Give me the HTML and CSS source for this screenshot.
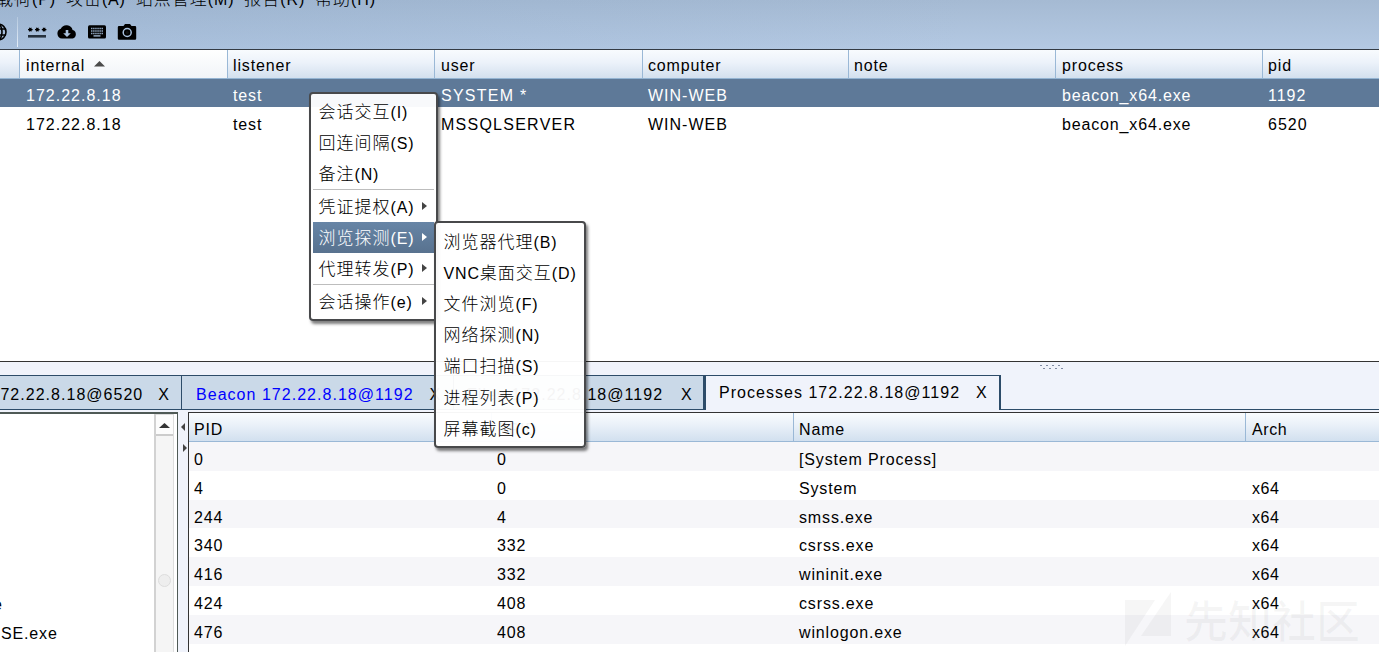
FILE: index.html
```html
<!DOCTYPE html>
<html lang="zh-CN">
<head>
<meta charset="utf-8">
<title>Beacon Console</title>
<link rel="stylesheet" href="styles.css">
</head>
<body>
<div class="app">
  <header class="top">
    <nav class="menubar">
      <span><b>载荷</b>(P)</span><span><b>攻击</b>(A)</span><span><b>站点管理</b>(M)</span><span><b>报告</b>(R)</span><span><b>帮助</b>(H)</span>
    </nav>
    <div class="toolbar">
      <svg class="globe" width="8" height="20" viewBox="0 0 8 20"><g fill="none" stroke="#000" stroke-width="1.6"><circle cx="-2" cy="10" r="8"/><ellipse cx="-2" cy="10" rx="4" ry="8"/><path d="M-2 7H6M-2 13H6"/></g></svg>
      <i class="tool-sep"></i>
      <svg class="tool" width="20" height="20" viewBox="0 0 20 20"><path d="M1 13h18v2.6H1z" fill="#26313d"/><path d="M1 7.6h4.600M8 7.600h4.600M14.800 7.600h4.600M2.200 5.800l2.200 3.600M4.400 5.800L2.200 9.400M9.200 5.800l2.200 3.600M11.400 5.800L9.200 9.400M16 5.800l2.200 3.600M18.200 5.800L16 9.400" stroke="#000" stroke-width="1.100"/></svg>
      <svg class="tool" width="20" height="20" viewBox="0 0 20 20"><path d="M5 16.500a5 5 0 0 1-1.200-9.700A6.300 6.300 0 0 1 15.600 8a4.400 4.400 0 0 1 0 8.500z"/><path d="M8.700 8h2.600v3.200h2.500L10 15l-3.800-3.800h2.500z" fill="#a9c1dd"/></svg>
      <svg class="tool" width="20" height="20" viewBox="0 0 20 20"><rect x="1" y="3.300" width="18" height="13.200" rx="1.500"/><path d="M4 6.500h12M4 9h12M4 11.500h12" stroke="#8fa5bf" stroke-width="1.600" stroke-dasharray="1.500 .6"/><path d="M6.500 13.900h7" stroke="#a9c1dd" stroke-width="1.300"/></svg>
      <svg class="tool" width="20" height="20" viewBox="0 0 20 20"><path d="M2 4h4.500L8 2h5l1.500 2H18q1.200 0 1.200 1.200v11.300q0 1.300-1.200 1.300H2q-1.200 0-1.200-1.300V5.200Q.8 4 2 4z"/><circle cx="10.200" cy="10.500" r="4" fill="none" stroke="#a9c1dd" stroke-width="1.500"/><circle cx="10.200" cy="10.500" r="1.600" fill="#111"/></svg>
    </div>
  </header>

  <section class="sessions">
    <div class="srow shead"><span></span><span class="sorted">internal<svg width="11" height="6" viewBox="0 0 11 6"><path d="M5.500 0L11 5.500H0z" fill="#4b4b4b"/></svg></span><span>listener</span><span>user</span><span>computer</span><span>note</span><span>process</span><span>pid</span></div>
    <div class="srow selected"><span></span><span class="num">172.22.8.18</span><span>test</span><span class="caps">SYSTEM *</span><span class="num">WIN-WEB</span><span></span><span>beacon_x64.exe</span><span class="num">1192</span></div>
    <div class="srow"><span></span><span class="num">172.22.8.18</span><span>test</span><span class="caps">MSSQLSERVER</span><span class="num">WIN-WEB</span><span></span><span>beacon_x64.exe</span><span class="num">6520</span></div>
  </section>

  <div class="splitter"><svg width="24" height="6" viewBox="0 0 24 6"><path d="M0 1.500h24M3 4.500h21" stroke="#7f8ba3" stroke-width="1" stroke-dasharray="2 4"/></svg></div>

  <div class="tabs">
    <div class="tab t1"><span>172.22.8.18@6520</span><em>X</em></div>
    <div class="tab t2"><span>Beacon 172.22.8.18@1192</span><em>X</em></div>
    <div class="tab t3"><span>Files 172.22.8.18@1192</span><em>X</em></div>
    <div class="tab active"><span>Processes 172.22.8.18@1192</span><em>X</em></div>
    <div class="tab-rest"></div>
  </div>

  <main class="bottom">
    <div class="tree">
      <div class="tree-list"><span class="clip">e</span><span>SE.exe</span></div>
      <div class="scroll"><div class="up"><svg width="11" height="6" viewBox="0 0 11 6"><path d="M5.500 0L11 5H0z" fill="#333"/></svg></div><div class="thumb"><i></i></div></div>
    </div>
    <div class="divider"><svg width="6" height="34" viewBox="0 0 6 34"><path d="M4 0v8L0 4zM2 21v8l4-4z" fill="#444"/></svg></div>
    <div class="procs">
      <div class="prow phead"><span>PID</span><span>PPID</span><span>Name</span><span>Arch</span></div>
      <div class="prow"><span>0</span><span>0</span><span>[System Process]</span><span></span></div>
      <div class="prow"><span>4</span><span>0</span><span>System</span><span>x64</span></div>
      <div class="prow"><span>244</span><span>4</span><span>smss.exe</span><span>x64</span></div>
      <div class="prow"><span>340</span><span>332</span><span>csrss.exe</span><span>x64</span></div>
      <div class="prow"><span>416</span><span>332</span><span>wininit.exe</span><span>x64</span></div>
      <div class="prow"><span>424</span><span>408</span><span>csrss.exe</span><span>x64</span></div>
      <div class="prow"><span>476</span><span>408</span><span>winlogon.exe</span><span>x64</span></div>
      <div class="prow"></div>
    </div>
  </main>

  <div class="watermark"><svg width="48" height="54" viewBox="0 0 48 54"><path d="M0 8H30L0 54zM46 0V44H16z" fill="currentColor"/></svg><span>先知社区</span></div>

  <div class="popup context">
    <div class="item"><span><b>会话交互</b>(I)</span></div>
    <div class="item"><span><b>回连间隔</b>(S)</span></div>
    <div class="item"><span><b>备注</b>(N)</span></div>
    <hr>
    <div class="item"><span><b>凭证提权</b>(A)</span><i class="arrow"></i></div>
    <div class="item hot"><span><b>浏览探测</b>(E)</span><i class="arrow"></i></div>
    <div class="item"><span><b>代理转发</b>(P)</span><i class="arrow"></i></div>
    <hr>
    <div class="item"><span><b>会话操作</b>(e)</span><i class="arrow"></i></div>
  </div>
  <div class="popup submenu">
    <div class="item"><span><b>浏览器代理</b>(B)</span></div>
    <div class="item"><span>VNC<b>桌面交互</b>(D)</span></div>
    <div class="item"><span><b>文件浏览</b>(F)</span></div>
    <div class="item"><span><b>网络探测</b>(N)</span></div>
    <div class="item"><span><b>端口扫描</b>(S)</span></div>
    <div class="item"><span><b>进程列表</b>(P)</span></div>
    <div class="item"><span><b>屏幕截图</b>(c)</span></div>
  </div>
</div>
</body>
</html>
```
FILE: styles.css
```css
* { box-sizing: border-box; }
body { margin: 0; overflow: hidden; }
.app {
  position: relative; width: 1379px; height: 652px; overflow: hidden;
  display: flex; flex-direction: column; background: #fff; color: #000;
  font: 16px/28px "Liberation Sans", "Noto Sans CJK SC", sans-serif;
  letter-spacing: .85px; white-space: nowrap;
}
b { font: 300 17px/1 "Noto Sans CJK SC", sans-serif; letter-spacing: 1px; }

/* Menu bar and toolbar */
.top { height: 50px; flex: none; overflow: hidden; border-bottom: 1px solid #343b44; background: linear-gradient(100deg, rgba(130,160,195,.25), rgba(255,255,255,0) 70%), linear-gradient(#a5bad3, #b4c9e3); }
.menubar { display: flex; gap: 10px; height: 14px; margin: -5px 0 0 -4px; line-height: 6px; }
.menubar b { line-height: 6px; }
.toolbar { display: flex; align-items: center; height: 30px; margin-top: 8px; }
.tool-sep { width: 1px; height: 30px; margin: 0 9px 0 9px; background: linear-gradient(#b5c9df, #e5eef8); }
.tool { margin-right: 10px; }

/* Session table */
.sessions { height: 311px; flex: none; }
.srow { display: grid; grid-template-columns: 20px 208px 207px 208px 206px 207px 207px 1fr; height: 29px; line-height: 35px; }
.srow span { padding-left: 6px; height: 29px; }
.srow span:nth-child(3), .srow span:nth-child(6), .srow span:nth-child(8) { padding-left: 5px; }
.srow span:nth-child(5) { padding-left: 5px; }
.srow.shead { line-height: 32px; background: linear-gradient(#f8fbfe, #ecf2fa 45%, #d3e0ee); border-bottom: 1px solid #94b4d2; }
.shead span { height: 28px; border-right: 1px solid #9ab8d6; }
.shead span:last-child { border: 0; }
.shead .sorted { background: linear-gradient(#fff, #f1f4f8); }
.sorted svg { margin-left: 9px; vertical-align: 4px; }
.srow.selected { color: #fff; background: #5e7998; height: 28px; line-height: 34px; }
.srow.selected span { height: 28px; }
.caps { letter-spacing: 1.25px; }
.num { letter-spacing: 1px; }

/* Lower tab strip */
.splitter { height: 14px; flex: none; border-top: 1px solid #333; background: #f0f3fb; padding-left: 1040px; line-height: 0; }
.splitter svg { margin-top: 2px; }
.tabs { display: flex; height: 37px; flex: none; background: #f0f3fb; letter-spacing: 1.03px; }
.tab { display: flex; height: 35px; line-height: 38px; background: #cad9e8; border: solid #2d4c69; border-width: 1px 1px 1px 0; }
.tab em { font-style: normal; margin-left: 16px; }
.t1 { width: 182px; justify-content: flex-end; padding-right: 11px; }
.t1 em { margin-left: 15px; }
.t2 { width: 272px; padding-left: 14px; color: #00f; }
.t2 em { color: #000; }
.t3 { width: 251px; padding-left: 13px; border-right-width: 2px; }
.t3 em { margin-left: 18px; }
.active { width: 296px; padding-left: 13px; line-height: 33px; background: #f0f3fb; border-width: 1px 2px 0 1px; }
.tab-rest { flex: 1; height: 35px; border-bottom: 1px solid #2d4c69; }

/* Lower panes */
.bottom { display: flex; flex: 1; min-height: 0; background: #f0f3fb; }
.tree { width: 178px; display: flex; background: #fff; border: solid #4f5a56; border-width: 2px 1px 0 0; }
.tree-list { width: 154px; display: flex; flex-direction: column; padding-top: 176px; line-height: 29px; overflow: hidden; }
.clip { margin-left: -7px; }
.tree-list span:last-child { margin-left: 1px; letter-spacing: .85px; }
.scroll { width: 20px; background: #f5f5f5; border-left: 2px solid #d2d2d2; border-right: 1px solid #ddd; }
.up { height: 22px; padding-left: 3px; line-height: 20px; background: #fcfcfc; border-top: 1px solid #ddd; border-bottom: 2px solid #ccc; }
.up svg { vertical-align: 1px; }
.thumb { padding: 138px 0 0 2px; line-height: 0; }
.thumb i { display: block; width: 13px; height: 13px; border: 1px solid #ddd; border-radius: 50%; background: #eee; }
.divider { width: 10px; padding: 11px 0 0 3px; line-height: 0; }
.procs { flex: 1; border: solid #333; border-width: 1px 0 0 1px; background: #fff; }
.prow { display: grid; grid-template-columns: 303px 302px 452px 1fr; height: 28.8px; line-height: 36px; }
.prow span { padding-left: 5px; height: 28px; }
.prow span:last-child { padding-left: 6px; letter-spacing: .6px; }
.prow:nth-child(even) { background: #f6f6f9; }
.prow.phead { height: 29px; line-height: 34px; background: linear-gradient(#f9fcfe, #e9f0f8 45%, #d2e0ef); border-bottom: 1px solid #9ab8d6; }
.phead span { height: 28px; border-right: 1px solid #9ab8d6; }
.phead span:last-child { border: 0; }

/* Popup menus */
.popup { position: absolute; background: rgba(255,255,255,.955); border: 2px solid #48494b; border-radius: 4px; box-shadow: 2px 3px 3px rgba(0,0,0,.5); }
.context { left: 309px; top: 92px; width: 129px; height: 229px; padding: 2px 2px; }
.submenu { left: 434px; top: 221px; width: 152px; height: 227px; padding: 4px 2px; }
.item { display: flex; align-items: center; justify-content: space-between; height: 31px; padding: 0 7px 0 5.5px; }
.submenu .item { height: 31.2px; }
.item span { line-height: 30px; }
.context .item span { line-height: 31px; padding-top: 1px; }
.hot { color: #fff; background: linear-gradient(#6785a6, #58728f); }
.popup hr { height: 1px; margin: 0 0 1px; border: 0; background: #bdbdbd; }
.arrow { border: solid transparent; border-width: 4px 0 4px 5px; border-left-color: #444; margin-bottom: 2px; }
.hot .arrow { border-left-color: #fff; }

/* Community mark over the table corner */
.watermark { position: absolute; left: 1125px; top: 592px; display: flex; gap: 11px; color: rgba(100,100,100,.06); font: 500 44px/54px "Noto Sans CJK SC", sans-serif; letter-spacing: 0; }
```
